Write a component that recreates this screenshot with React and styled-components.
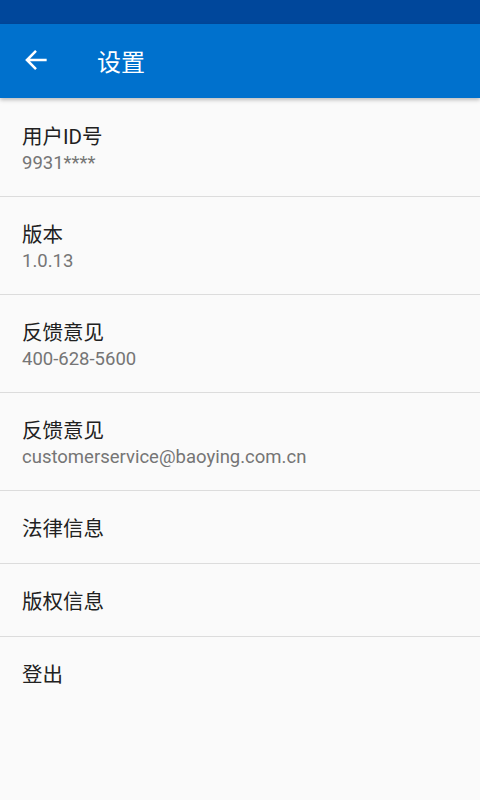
import React from "react";
import styled, { createGlobalStyle } from "styled-components";

const Global = createGlobalStyle`
  body {
    margin: 0;
    background: #fafafa;
    font-family: Roboto, "Noto Sans CJK SC", sans-serif;
  }
`;

const Page = styled.div`
  width: 480px;
  min-height: 800px;
  background: #fafafa;
`;

const StatusBar = styled.div`
  height: 24px;
  background: #00479b;
`;

const Toolbar = styled.header`
  height: 74px;
  box-sizing: border-box;
  padding: 0 0 2px 20px;
  background: #0071cd;
  display: flex;
  align-items: center;
  box-shadow: 0 2px 4px rgba(0, 0, 0, 0.25);
  position: relative;
`;

const Title = styled.h1`
  margin: 0 0 0 45px;
  font-size: 24px;
  font-weight: 400;
  color: #fff;
`;

const List = styled.ul`
  list-style: none;
  margin: 0;
  padding: 0;
`;

const Row = styled.li`
  padding: 25px 22px ${(p) => (p.$sub ? "21px" : "20px")};
  border-bottom: ${(p) => (p.$last ? "none" : "1px solid #dcdcdc")};
  & + & {
    padding-top: 24px;
  }
`;

const Label = styled.div`
  font-size: 20.5px;
  line-height: 28px;
  color: #212121;
`;

const Sub = styled.div`
  font-size: 18.5px;
  line-height: 24px;
  color: #757575;
`;

const items = [
  { label: "用户ID号", sub: "9931****" },
  { label: "版本", sub: "1.0.13" },
  { label: "反馈意见", sub: "400-628-5600" },
  { label: "反馈意见", sub: "customerservice@baoying.com.cn" },
  { label: "法律信息" },
  { label: "版权信息" },
  { label: "登出" },
];

export default function App() {
  return (
    <Page>
      <Global />
      <StatusBar />
      <Toolbar>
        <svg width="32" height="32" viewBox="0 0 24 24" fill="none" stroke="#fff" strokeWidth="1.9">
          <path d="M20 12H5.5M12 5.2L5.2 12l6.8 6.8" />
        </svg>
        <Title>设置</Title>
      </Toolbar>
      <List>
        {items.map((it, i) => (
          <Row key={i} $sub={!!it.sub} $last={i === items.length - 1}>
            <Label>{it.label}</Label>
            {it.sub && <Sub>{it.sub}</Sub>}
          </Row>
        ))}
      </List>
    </Page>
  );
}
